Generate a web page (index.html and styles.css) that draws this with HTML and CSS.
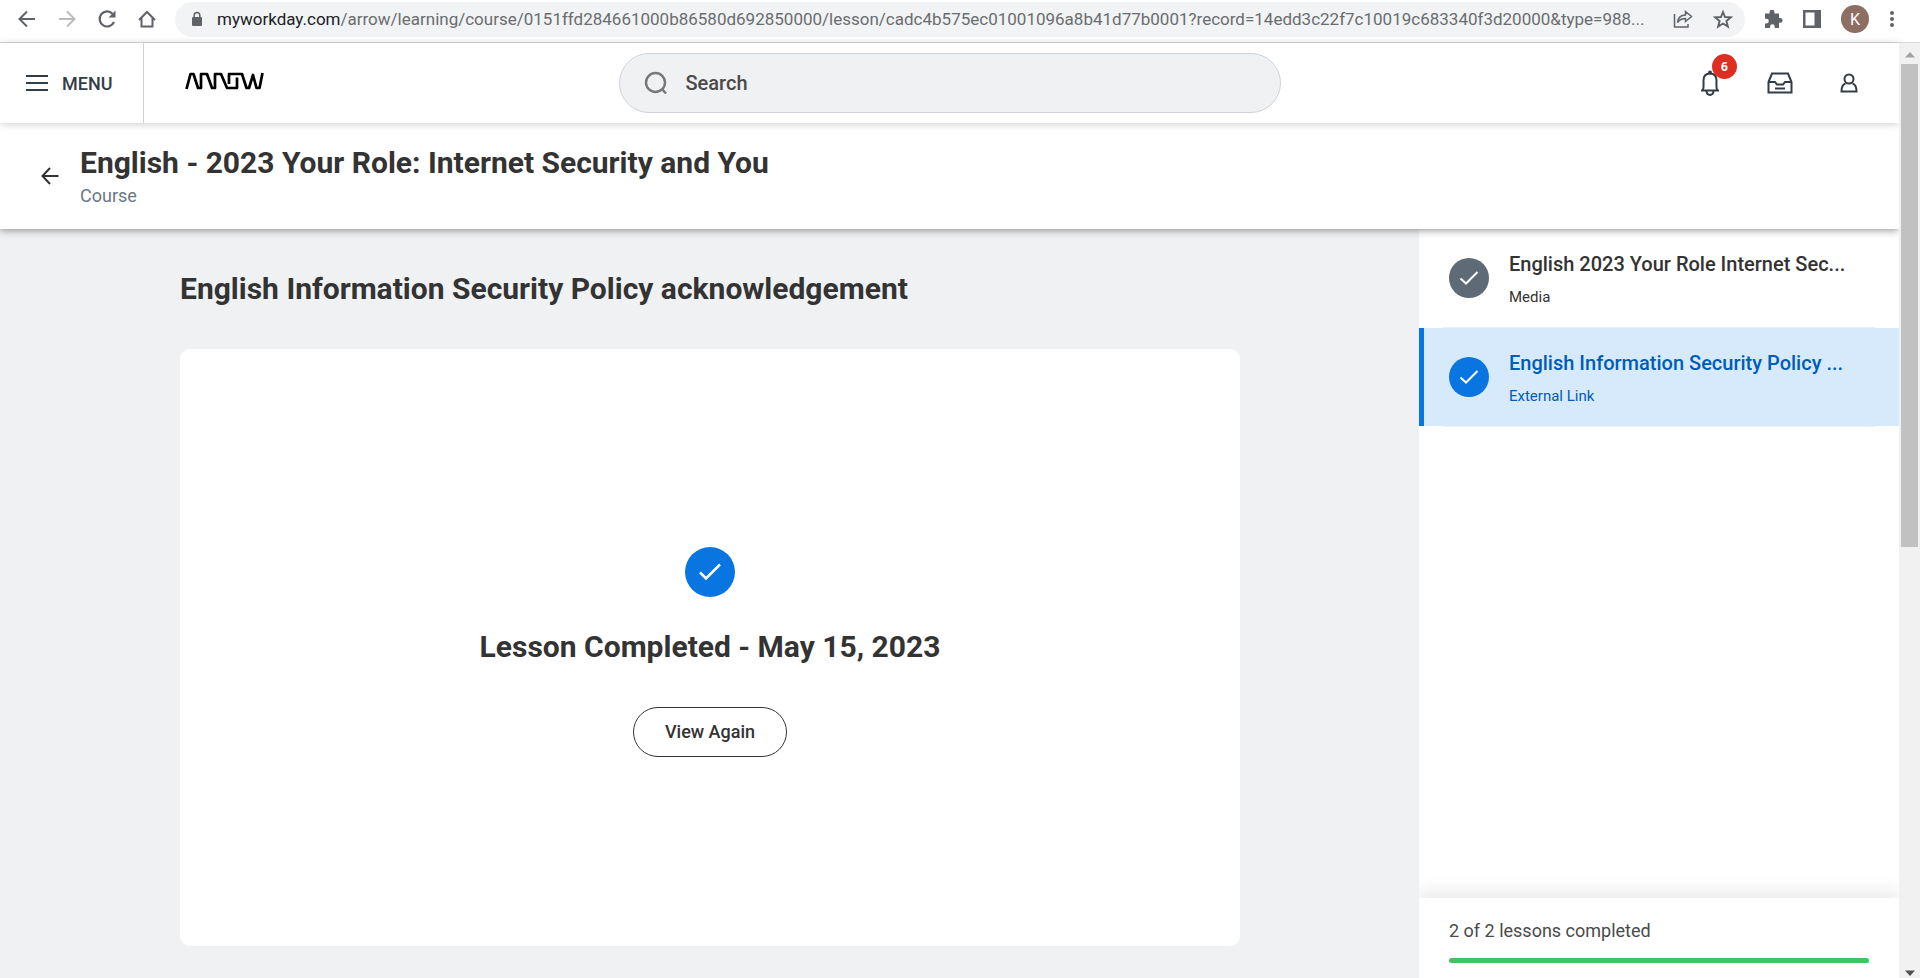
FILE: index.html
```html
<!DOCTYPE html>
<html lang="en">
<head>
<meta charset="utf-8">
<title>English - 2023 Your Role: Internet Security and You</title>
<link rel="stylesheet" href="styles.css">
</head>
<body>
<div class="browser-bar">
  <nav class="browser-nav" aria-label="Browser">
    <button class="icon-btn" aria-label="Back"><svg width="20" height="20" viewBox="0 0 20 20" fill="none" stroke="#5f6368" stroke-width="2"><path d="M18 10H3M10 2.500L2.500 10L10 17.500"/></svg></button>
    <button class="icon-btn" aria-label="Forward"><svg width="20" height="20" viewBox="0 0 20 20" fill="none" stroke="#babcbe" stroke-width="2"><path d="M2 10H17M10 2.500L17.500 10L10 17.500"/></svg></button>
    <button class="icon-btn" aria-label="Reload"><svg width="20" height="20" viewBox="0 0 20 20"><path d="M17 13A7.500 7.500 0 1 1 15.500 4.700" fill="none" stroke="#5f6368" stroke-width="2.200"/><path d="M18.500 1.500V8.500H11.500Z" fill="#5f6368"/></svg></button>
    <button class="icon-btn" aria-label="Home"><svg width="20" height="20" viewBox="0 0 20 20" fill="none" stroke="#5f6368" stroke-width="2"><path d="M2 11L10 3L18 11M4.500 9V17.500H15.500V9"/></svg></button>
  </nav>
  <div class="address">
    <svg width="12" height="16" viewBox="0 0 12 16"><rect x="1" y="6" width="10" height="9" rx="1" fill="#5f6368"/><path d="M3.200 7V4.200a2.800 2.800 0 0 1 5.600 0V7" fill="none" stroke="#5f6368" stroke-width="1.500"/></svg>
    <p class="url"><span class="url-host">myworkday.com</span>/arrow/learning/course/0151ffd284661000b86580d692850000/lesson/cadc4b575ec01001096a8b41d77b0001?record=14edd3c22f7c10019c683340f3d20000&amp;type=988...</p>
    <button class="icon-btn" aria-label="Share"><svg width="20" height="20" viewBox="0 0 20 20" fill="none" stroke="#5f6368" stroke-width="1.500"><path d="M1.500 5V18H15V15M4.500 13.500C5 9 8 6 12.500 6V2.500L18.500 7.500L12.500 12.500V9.500C9 9.500 6.500 10.500 4.500 13.500Z"/></svg></button>
    <button class="icon-btn" aria-label="Bookmark"><svg width="20" height="20" viewBox="0 0 20 20" fill="none" stroke="#5f6368" stroke-width="1.900"><path d="M10 3L12 8L17.800 8.300L13.400 12L14.900 17.600L10 14.500L5.100 17.600L6.600 12L2.200 8.300L8 8Z"/></svg></button>
  </div>
  <div class="browser-tools">
    <button class="icon-btn" aria-label="Extensions"><svg width="20" height="20" viewBox="0 0 20 20" fill="#5f6368"><path d="M2 4.500H6.500V3.300a2.500 2.500 0 0 1 5 0V4.500H16V9H17.200a2.400 2.400 0 0 1 0 4.800H16V19H11.700V17.500a2.300 2.300 0 0 0-4.600 0V19H2V14.400H3.500a2.300 2.300 0 0 0 0-4.600H2Z"/></svg></button>
    <button class="icon-btn" aria-label="Side panel"><svg width="18" height="18" viewBox="0 0 18 18"><path d="M0 0H18V18H0ZM2.500 2.500V15.500H11.500V2.500Z" fill="#5f6368" fill-rule="evenodd"/></svg></button>
    <button class="profile" aria-label="Profile K">K</button>
    <button class="icon-btn" aria-label="More"><svg width="6" height="18" viewBox="0 0 6 18" fill="#5f6368"><circle cx="3" cy="3" r="2"/><circle cx="3" cy="9" r="2"/><circle cx="3" cy="15" r="2"/></svg></button>
  </div>
</div>
<div class="viewport">
  <div class="page">
    <header class="app-header">
      <div class="brand">
        <button class="menu"><svg width="24" height="16" viewBox="0 0 24 16" stroke="#333d47" stroke-width="2"><path d="M1 1H23M1 8H23M1 15H23"/></svg>MENU</button>
        <a class="logo" href="#" aria-label="Arrow"><svg width="80" height="18" viewBox="0 0 80 18" fill="none" stroke="#000" stroke-width="2.700" stroke-linejoin="round"><path d="M1.500 17L5.500 2H8.500L13 16H16V2H22L27 16H30V2H36L42 16H52V5.500M44 12V2H57L61.500 16H64L68 3L71.500 16H74.500L77.500 1"/></svg></a>
      </div>
      <label class="search">
        <svg width="24" height="24" viewBox="0 0 24 24" fill="none" stroke="#777" stroke-width="2.400"><circle cx="11.500" cy="11.500" r="9.500"/><path d="M18 18L22 22.500"/></svg>
        <input type="search" placeholder="Search" aria-label="Search">
      </label>
      <div class="actions">
        <button class="icon-btn" aria-label="Notifications, 6 new"><svg width="20" height="26" viewBox="0 0 20 26" fill="none" stroke="#333d47" stroke-width="2"><path d="M1 20.500H19M3 20C4 16 3.500 14 3.500 10.500C3.500 6 6 3.500 10 3.500S16.500 6 16.500 10.500C16.500 14 16 16 17 20M6.500 21.500C7 26 13 26 13.500 21.500"/><circle cx="10" cy="2.500" r="1"/></svg><span class="badge">6</span></button>
        <button class="icon-btn" aria-label="Inbox"><svg width="26" height="22" viewBox="0 0 26 22" fill="none" stroke="#333d47" stroke-width="2"><path d="M1.500 10L5 1.500H21L24.500 10V20.500H1.500ZM1.500 10H8L10 12.500H16L18 10H24.500M8 16.500H18"/></svg></button>
        <button class="icon-btn" aria-label="Account"><svg width="18" height="20" viewBox="0 0 18 20" fill="none" stroke="#333d47" stroke-width="2"><circle cx="9" cy="6" r="4.500"/><path d="M5.500 10.500C2.500 11.500 1.500 14 1.500 18.500H16.500C16.500 14 15.500 11.500 12.500 10.500"/></svg></button>
      </div>
    </header>
    <div class="course-bar">
      <button class="icon-btn" aria-label="Go back"><svg width="20" height="20" viewBox="0 0 20 20" fill="none" stroke="#333" stroke-width="2"><path d="M18.500 10H3M10 2L2.500 10L10 18"/></svg></button>
      <div class="course-text">
        <h1 class="title">English - 2023 Your Role: Internet Security and You</h1>
        <p class="subtitle">Course</p>
      </div>
    </div>
    <div class="content">
      <main class="lesson">
        <h2 class="title">English Information Security Policy acknowledgement</h2>
        <section class="card">
          <span class="check check-large"><svg width="24" height="20" viewBox="0 0 24 20" fill="none" stroke="#fff" stroke-width="2.500"><path d="M2 10.500L8 16.500L22 2.500"/></svg></span>
          <h3 class="title">Lesson Completed - May 15, 2023</h3>
          <button class="again">View Again</button>
        </section>
      </main>
      <aside class="sidebar">
        <ul class="lessons">
          <li><a class="item" href="#"><span class="check check-done"><svg width="20" height="16" viewBox="0 0 20 16" fill="none" stroke="#fff" stroke-width="2"><path d="M1.500 8.500L7 13.500L18.500 2"/></svg></span><span class="item-text"><span class="item-name">English 2023 Your Role Internet Sec...</span><span class="item-kind">Media</span></span></a></li>
          <li><a class="item item-current" href="#" aria-current="page"><span class="check"><svg width="20" height="16" viewBox="0 0 20 16" fill="none" stroke="#fff" stroke-width="2"><path d="M1.500 8.500L7 13.500L18.500 2"/></svg></span><span class="item-text"><span class="item-name">English Information Security Policy ...</span><span class="item-kind">External Link</span></span></a></li>
        </ul>
        <div class="progress">
          <label for="done">2 of 2 lessons completed</label>
          <progress id="done" value="2" max="2"></progress>
        </div>
      </aside>
    </div>
  </div>
  <div class="scrollbar" aria-hidden="true">
    <svg width="10" height="6" viewBox="0 0 10 6"><path d="M0 5.500L5 0L10 5.500Z" fill="#a3a3a3"/></svg>
    <div class="track"><div class="thumb"></div></div>
    <svg width="10" height="6" viewBox="0 0 10 6"><path d="M0 0.500L5 6L10 0.500Z" fill="#505050"/></svg>
  </div>
</div>
</body>
</html>
```
FILE: styles.css
```css
* { box-sizing: border-box; margin: 0; }

body {
  display: flex;
  flex-direction: column;
  height: 100vh;
  overflow: hidden;
  background: #fff;
  color: #333;
  font-family: Roboto, sans-serif;
}

button {
  padding: 0;
  border: 0;
  background: none;
  color: inherit;
  font: inherit;
  cursor: pointer;
}

a { color: inherit; text-decoration: none; }
svg { display: block; flex: none; }
.icon-btn { position: relative; flex: none; }

.browser-bar {
  display: flex;
  flex: none;
  align-items: center;
  gap: 18px;
  height: 43px;
  padding: 0 25px 4px 17px;
  border-bottom: 1px solid #d9dbdd;
}
.browser-nav { display: flex; gap: 20px; }
.address {
  display: flex;
  flex: 1;
  align-items: center;
  gap: 20px;
  min-width: 0;
  height: 35px;
  padding: 0 12px 0 16px;
  border-radius: 18px;
  background: #f1f3f4;
}
.address > svg { margin-right: -6px; }
.url {
  flex: 1;
  margin-right: -8px;
  overflow: hidden;
  color: #6a6d70;
  font-size: 17px;
  line-height: 24px;
  white-space: nowrap;
}
.url-host { color: #202124; }
.browser-tools { display: flex; align-items: center; gap: 20px; }
.profile {
  width: 28px;
  height: 28px;
  border-radius: 50%;
  background: #8d6e63;
  color: #fff;
  font-size: 16px;
}

.viewport { display: flex; flex: 1; min-height: 0; }
.page { display: flex; flex: 1; flex-direction: column; min-width: 0; }

.app-header {
  position: relative;
  z-index: 3;
  display: grid;
  flex: none;
  grid-template-columns: 1fr minmax(200px, 662px) 1fr;
  align-items: center;
  height: 80px;
  background: #fff;
  box-shadow: 0 1px 8px rgba(0, 0, 0, 0.2);
}
.brand { display: flex; align-items: center; gap: 41px; height: 100%; }
.menu {
  display: flex;
  align-items: center;
  gap: 13px;
  width: 144px;
  height: 100%;
  padding-left: 25px;
  border-right: 1px solid #ced3d9;
  color: #333d47;
  font-size: 18px;
  font-weight: 500;
}
.logo { padding-bottom: 4px; }
.search {
  display: flex;
  align-items: center;
  gap: 18px;
  height: 60px;
  padding: 0 24px;
  border: 1px solid #ced3d9;
  border-radius: 30px;
  background: #eff1f3;
}
.search input {
  flex: 1;
  min-width: 0;
  padding: 0;
  border: 0;
  outline: 0;
  background: none;
  font: 500 20px/24px Roboto, sans-serif;
}
.search input::placeholder { color: #4a4a4a; }
.actions {
  display: flex;
  align-items: center;
  justify-content: flex-end;
  gap: 47px;
  padding-right: 41px;
}
.badge {
  position: absolute;
  top: -16px;
  left: 12px;
  width: 25px;
  height: 25px;
  border-radius: 50%;
  background: #de2e21;
  color: #fff;
  font: 700 12px/25px "Open Sans", sans-serif;
}

.course-bar {
  position: relative;
  z-index: 2;
  display: flex;
  flex: none;
  align-items: center;
  gap: 20px;
  height: 106px;
  padding-left: 40px;
  background: #fff;
  box-shadow: 0 1px 8px rgba(0, 0, 0, 0.45);
}
.course-text { padding-top: 3px; }
.title { font-size: 30px; font-weight: 700; line-height: 36px; }
.subtitle { color: #6b7785; font-size: 18px; line-height: 30px; }

.content { display: flex; flex: 1; min-height: 0; }
.lesson {
  display: flex;
  flex: 1;
  flex-direction: column;
  gap: 42px;
  min-width: 0;
  padding: 42px 179px 32px 180px;
  background: #eff1f3;
}
.card {
  display: flex;
  flex: 1;
  flex-direction: column;
  align-items: center;
  justify-content: center;
  padding-top: 8px;
  border-radius: 10px;
  background: #fff;
}
.card .title { margin: 32px 0 42px; }
.check {
  display: grid;
  flex: none;
  place-items: center;
  width: 40px;
  height: 40px;
  border-radius: 50%;
  background: #0875e1;
}
.check-done { background: #5e6a75; }
.check-large { width: 50px; height: 50px; }
.again {
  height: 50px;
  padding: 0 31px;
  border: 1px solid #333;
  border-radius: 25px;
  font-size: 18px;
  font-weight: 500;
}

.sidebar {
  display: flex;
  flex: 0 0 480px;
  flex-direction: column;
  overflow: hidden;
}
.lessons { padding: 0; list-style: none; }
.lessons li::after {
  display: block;
  height: 1px;
  margin: 0 24px;
  background: #eceef0;
  content: "";
}
.item {
  display: flex;
  align-items: center;
  gap: 20px;
  height: 98px;
  padding: 0 24px 0 25px;
  border-left: 5px solid transparent;
}
.item-current { border-color: #0875e1; background: #d7eafb; color: #005cb9; }
.item-text { display: grid; gap: 6px; min-width: 0; padding-top: 2px; }
.item-name {
  overflow: hidden;
  font-size: 20px;
  font-weight: 500;
  line-height: 30px;
  white-space: nowrap;
}
.item-kind { font-size: 15px; line-height: 24px; }
.progress {
  display: grid;
  gap: 14px;
  margin-top: auto;
  padding: 20px 30px 15px;
  box-shadow: 0 -8px 16px rgba(0, 0, 0, 0.08);
  color: #4a4a4a;
  font-size: 18px;
  line-height: 26px;
}
.progress progress {
  width: 100%;
  height: 5px;
  border: 0;
  border-radius: 3px;
  appearance: none;
}
.progress ::-webkit-progress-bar { border-radius: 3px; background: #e8ebed; }
.progress ::-webkit-progress-value { border-radius: 3px; background: #43c463; }

.scrollbar {
  position: relative;
  z-index: 4;
  display: flex;
  flex: none;
  flex-direction: column;
  align-items: center;
  width: 21px;
  padding: 9px 0 2px;
  background: #f1f1f1;
}
.track { flex: 1; width: 17px; padding: 6px 0 12px; }
.thumb { height: 54%; background: #c1c1c1; }
```
